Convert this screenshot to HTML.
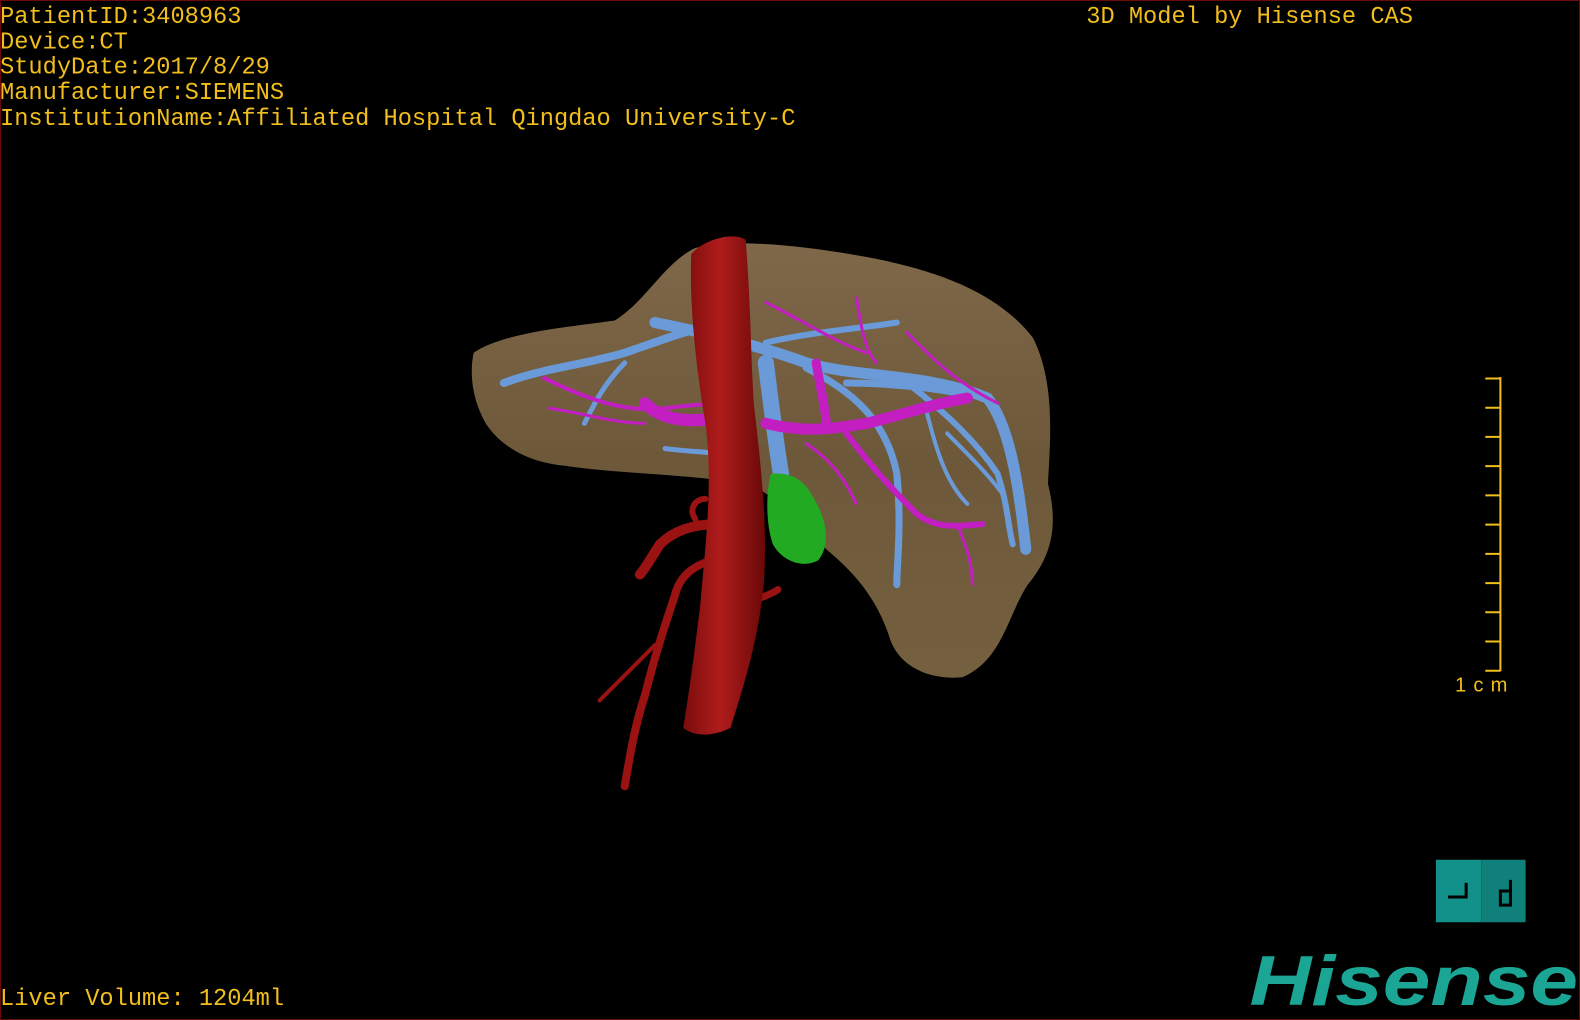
<!DOCTYPE html>
<html><head><meta charset="utf-8"><style>
html,body{margin:0;padding:0;background:#000;width:1580px;height:1020px;overflow:hidden}
svg{display:block}
text{font-family:"Liberation Mono",monospace;fill:#f2be1c}
</style></head><body>
<svg width="1580" height="1020" viewBox="0 0 1568 1012" preserveAspectRatio="none">
<defs>
<linearGradient id="lv" x1="0" y1="0" x2="0" y2="1"><stop offset="0" stop-color="#7e6849"/><stop offset="0.5" stop-color="#6e583a"/><stop offset="1" stop-color="#74603f"/></linearGradient>
<linearGradient id="ao" x1="0" y1="0" x2="1" y2="0"><stop offset="0" stop-color="#7a0c0c"/><stop offset="0.45" stop-color="#b01c1c"/><stop offset="1" stop-color="#6a0808"/></linearGradient>
</defs>
<rect x="0" y="0" width="1568" height="1012" fill="#000" stroke="#6a0a0a" stroke-width="2"/>
<path d="M470,350 C500,330 560,325 610,318 C640,300 660,260 690,246 C730,236 800,244 860,255 C930,268 990,290 1025,335 C1048,380 1042,440 1040,480 C1050,520 1045,550 1020,580 C1000,610 995,655 955,672 C920,675 890,660 882,630 C870,595 850,570 820,545 C790,515 770,490 740,480 C680,470 610,470 560,462 C520,458 495,440 482,420 C468,395 466,370 470,350 Z" fill="url(#lv)"/>
<g fill="none" stroke="#6a9ad8" stroke-linecap="round">
<path d="M500,380 C540,365 580,362 620,350 C650,340 680,328 700,325" stroke-width="8"/>
<path d="M650,320 C700,330 760,345 800,360 C850,375 920,370 980,395 C1000,420 1010,470 1018,545" stroke-width="11"/>
<path d="M760,340 C800,330 860,325 890,320" stroke-width="6"/>
<path d="M800,365 C850,390 880,420 890,470 C895,520 890,560 890,580" stroke-width="7"/>
<path d="M900,380 C940,410 970,440 990,470 C1000,500 1000,520 1005,540" stroke-width="6"/>
<path d="M760,360 C765,400 770,440 775,470" stroke-width="16"/>
<path d="M840,380 C880,380 930,385 960,392" stroke-width="7"/>
<path d="M620,360 C600,380 590,400 580,420" stroke-width="5"/>
<path d="M660,445 C680,448 700,448 710,450" stroke-width="5"/>
<path d="M920,410 C930,450 940,480 960,500" stroke-width="4"/>
<path d="M940,430 C960,450 980,470 995,490" stroke-width="4"/>
</g>
<g fill="none" stroke="#c21ec2" stroke-linecap="round">
<path d="M540,375 C580,395 620,410 660,405 C700,400 720,400 730,400" stroke-width="4"/>
<path d="M640,400 C660,420 690,418 710,415" stroke-width="12"/>
<path d="M760,420 C800,430 830,425 860,420 C900,410 930,400 960,395" stroke-width="11"/>
<path d="M840,430 C870,470 890,490 910,510 C930,525 950,522 975,520" stroke-width="6"/>
<path d="M810,360 C815,390 820,410 820,420" stroke-width="9"/>
<path d="M760,300 C800,320 830,340 860,350" stroke-width="3"/>
<path d="M850,295 C855,330 860,350 870,360" stroke-width="3"/>
<path d="M900,330 C930,360 950,380 990,400" stroke-width="3"/>
<path d="M950,520 C960,545 965,560 965,580" stroke-width="3"/>
<path d="M545,405 C580,410 610,420 640,420" stroke-width="3"/>
<path d="M800,440 C830,460 840,480 850,500" stroke-width="3"/>
</g>
<path d="M765,470 C790,468 800,480 808,495 C820,515 825,540 812,556 C795,565 775,555 767,540 C760,520 760,490 765,470 Z" fill="#22aa22"/>
<g fill="none" stroke="#9a1212" stroke-linecap="round">
<path d="M712,520 C690,520 670,525 655,540 C645,555 640,565 635,570" stroke-width="10"/>
<path d="M710,555 C690,560 675,570 670,590 C660,620 650,650 640,690 C630,720 625,750 620,780" stroke-width="8"/>
<path d="M650,640 C630,660 610,680 595,695" stroke-width="4"/>
<path d="M735,600 C750,595 765,590 772,585" stroke-width="7"/>
<path d="M700,495 C690,495 683,505 690,515" stroke-width="6"/>
</g>
<path d="M686,252 C700,236 730,230 740,238 C745,300 745,350 748,400 C755,460 762,520 758,580 C752,640 735,690 725,722 C710,730 690,732 678,722 C685,680 690,640 695,600 C700,540 708,480 700,420 C690,360 684,300 686,252 Z" fill="url(#ao)"/>
<text x="0" y="23" font-size="23.5">PatientID:3408963</text>
<text x="0" y="48" font-size="23.5">Device:CT</text>
<text x="0" y="73" font-size="23.5">StudyDate:2017/8/29</text>
<text x="0" y="98" font-size="23.5">Manufacturer:SIEMENS</text>
<text x="0" y="124" font-size="23.5">InstitutionName:Affiliated Hospital Qingdao University-C</text>
<text x="1078" y="23" font-size="23.5">3D Model by Hisense CAS</text>
<text x="0" y="997" font-size="23.5">Liver Volume: 1204ml</text>
<g stroke="#f2be1c" stroke-width="2" fill="none">
<path d="M1489,374 V666"/>
<path d="M1474,375.5 H1489 M1474,404.5 H1489 M1474,433.5 H1489 M1474,462.5 H1489 M1474,491.5 H1489 M1474,520.5 H1489 M1474,549.5 H1489 M1474,578.5 H1489 M1474,607.5 H1489 M1474,636.5 H1489 M1474,665.5 H1489"/>
</g>
<text x="1444" y="686" font-size="20" textLength="52" lengthAdjust="spacing" style="font-family:'Liberation Sans',sans-serif">1cm</text>
<rect x="1425" y="853" width="45" height="62" fill="#12918a"/>
<rect x="1470" y="853" width="44" height="62" fill="#0f807a"/>
<path d="M1437,890 H1455 V876" stroke="#000" stroke-width="3" fill="none"/>
<path d="M1499,873 V898 H1489 V884 H1499" stroke="#000" stroke-width="3" fill="none"/>
<text x="1240" y="997" font-size="70" font-weight="bold" font-style="italic" textLength="326" lengthAdjust="spacingAndGlyphs" style="font-family:'Liberation Sans',sans-serif;fill:#1aa595">Hisense</text>
</svg>
</body></html>
